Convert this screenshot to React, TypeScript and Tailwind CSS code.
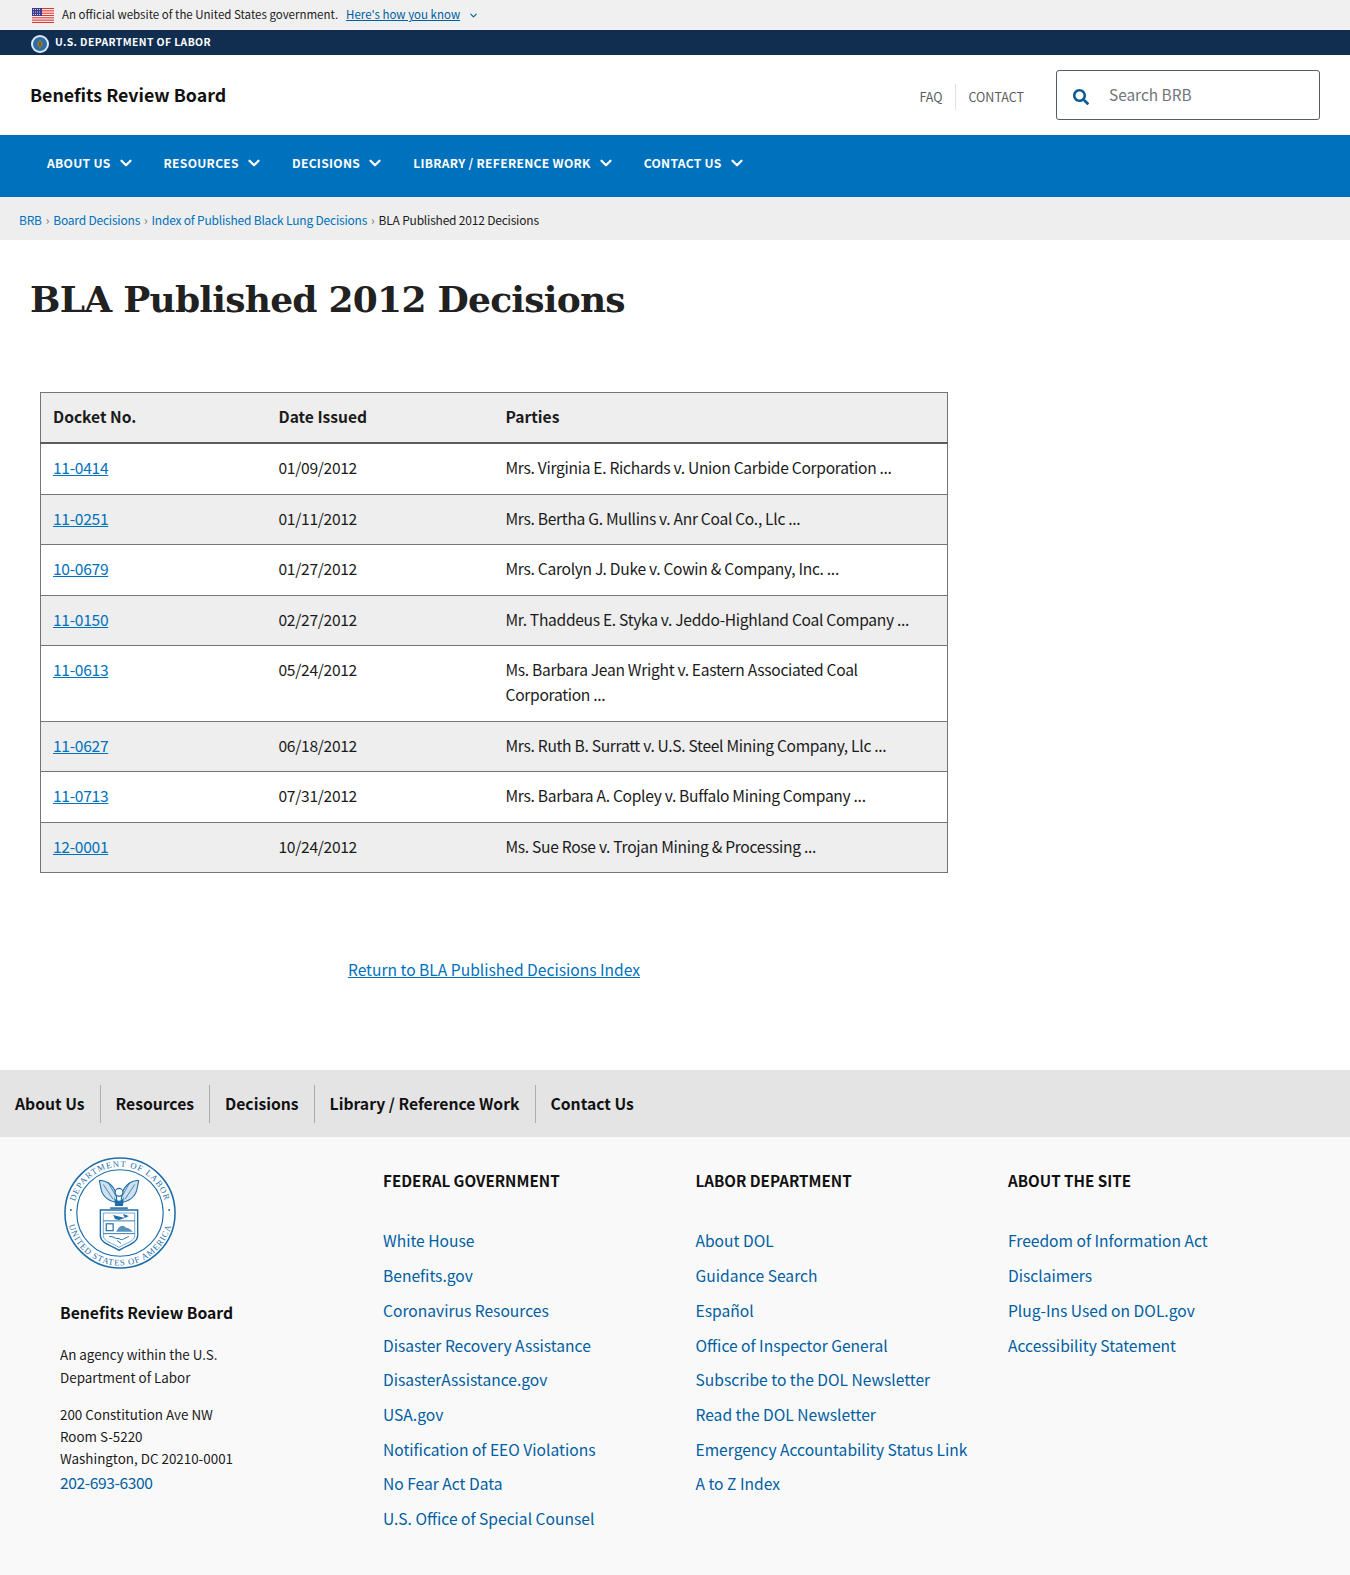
import type { ReactNode } from "react";
import { ChevronDown } from "lucide-react";
import { FaSearch } from "react-icons/fa";

const SANS = { fontFamily: '"Noto Sans CJK SC", "Source Sans Pro", "Noto Sans", sans-serif' };

const navItems = ["About Us", "Resources", "Decisions", "Library / Reference Work", "Contact Us"];

const rows = [
  ["11-0414", "01/09/2012", "Mrs. Virginia E. Richards v. Union Carbide Corporation ..."],
  ["11-0251", "01/11/2012", "Mrs. Bertha G. Mullins v. Anr Coal Co., Llc ..."],
  ["10-0679", "01/27/2012", "Mrs. Carolyn J. Duke v. Cowin & Company, Inc. ..."],
  ["11-0150", "02/27/2012", "Mr. Thaddeus E. Styka v. Jeddo-Highland Coal Company ..."],
  ["11-0613", "05/24/2012", "Ms. Barbara Jean Wright v. Eastern Associated Coal Corporation ..."],
  ["11-0627", "06/18/2012", "Mrs. Ruth B. Surratt v. U.S. Steel Mining Company, Llc ..."],
  ["11-0713", "07/31/2012", "Mrs. Barbara A. Copley v. Buffalo Mining Company ..."],
  ["12-0001", "10/24/2012", "Ms. Sue Rose v. Trojan Mining & Processing ..."],
];

const footerCols = [
  {
    title: "FEDERAL GOVERNMENT",
    links: [
      "White House",
      "Benefits.gov",
      "Coronavirus Resources",
      "Disaster Recovery Assistance",
      "DisasterAssistance.gov",
      "USA.gov",
      "Notification of EEO Violations",
      "No Fear Act Data",
      "U.S. Office of Special Counsel",
    ],
  },
  {
    title: "LABOR DEPARTMENT",
    links: [
      "About DOL",
      "Guidance Search",
      "Español",
      "Office of Inspector General",
      "Subscribe to the DOL Newsletter",
      "Read the DOL Newsletter",
      "Emergency Accountability Status Link",
      "A to Z Index",
    ],
  },
  {
    title: "ABOUT THE SITE",
    links: ["Freedom of Information Act", "Disclaimers", "Plug-Ins Used on DOL.gov", "Accessibility Statement"],
  },
];

function Flag() {
  return (
    <svg width="22" height="15" viewBox="0 0 22 15" aria-hidden>
      <rect width="22" height="15" fill="#fff" />
      {[0, 2, 4, 6, 8, 10, 12].map((y) => (
        <rect key={y} y={y * 1.154} width="22" height="1.154" fill="#d83933" />
      ))}
      <rect width="10" height="8" fill="#3c3b8e" />
      {[1.5, 3.5, 5.5, 7.5].map((x) =>
        [1.5, 4, 6.5].map((y) => <circle key={`${x}-${y}`} cx={x} cy={y} r="0.5" fill="#fff" />),
      )}
    </svg>
  );
}

function SmallSeal() {
  return (
    <svg width="18" height="18" viewBox="0 0 18 18" aria-hidden>
      <circle cx="9" cy="9" r="9" fill="#dfe9f2" />
      <circle cx="9" cy="9" r="7" fill="#2a6fa8" />
      <path d="M9 4.5 L12 9 L9 14 L6 9 Z" fill="#b5682a" />
      <rect x="8.2" y="7" width="1.6" height="5" fill="#3f7d3a" />
    </svg>
  );
}

function Seal() {
  const c = "#1f6da8";
  return (
    <svg width="112" height="112" viewBox="0 0 114 114" aria-hidden>
      <circle cx="57" cy="57" r="56" fill="#fff" stroke={c} strokeWidth="1.6" />
      <circle cx="57" cy="57" r="44" fill="#fff" stroke={c} strokeWidth="1.2" />
      <defs>
        <path id="seal-top" d="M 10 57 A 47 47 0 0 1 104 57" />
        <path id="seal-bottom" d="M 3.5 57 A 53.5 53.5 0 0 0 110.5 57" />
      </defs>
      <text fontFamily='"Liberation Serif", serif' fontSize="8.8" fill={c} letterSpacing="1.1">
        <textPath href="#seal-top" startOffset="50%" textAnchor="middle">
          DEPARTMENT OF LABOR
        </textPath>
      </text>
      <text fontFamily='"Liberation Serif", serif' fontSize="8.8" fill={c} letterSpacing="0.9">
        <textPath href="#seal-bottom" startOffset="50%" textAnchor="middle">
          UNITED STATES OF AMERICA
        </textPath>
      </text>
      <circle cx="7" cy="54" r="1" fill={c} />
      <circle cx="107" cy="54" r="1" fill={c} />
      {/* eagle */}
      <path d="M36 24 C42 23 50 28 53 37 L54 46 C47 46 40 41 38 34 Z" fill="#cfe0ee" stroke={c} strokeWidth="1.1" />
      <path d="M76 24 C70 23 62 28 59 37 L58 46 C65 46 72 41 74 34 Z" fill="#cfe0ee" stroke={c} strokeWidth="1.1" />
      <path d="M40 28 L50 43 M45 26 L53 40 M72 28 L62 43 M67 26 L59 40" stroke={c} strokeWidth="0.8" fill="none" />
      <circle cx="56" cy="36" r="4" fill="#fff" stroke={c} strokeWidth="1.3" />
      <path d="M51 40 C52 46 60 46 61 40 L60 50 L52 50 Z" fill={c} />
      <path d="M47 52 L65 52" stroke={c} strokeWidth="1.6" />
      {/* shield */}
      <path d="M37 54 L75 54 L75 80 C75 88 63 90 56 95 C49 90 37 88 37 80 Z" fill="#fff" stroke={c} strokeWidth="1.4" />
      <path d="M40 57 L72 57 L72 80 C72 86 62 88 56 92 C50 88 40 86 40 80 Z" fill="none" stroke={c} strokeWidth="0.6" />
      <path d="M40 65 L72 65 M40 78 L72 78" stroke={c} strokeWidth="0.9" />
      <path d="M50 59 L62 62 L56 64 L52 63 Z M60 58 L66 60 L62 62 Z" fill={c} />
      <rect x="43" y="68" width="7" height="7" fill="none" stroke={c} strokeWidth="1.2" />
      <path d="M53 76 C57 69 60 69 63 72 C66 72 68 74 70 76 Z" fill={c} opacity="0.75" />
      <path d="M46 81 C50 80 52 84 56 83 C59 86 62 82 66 81 M54 85 L58 88" stroke={c} strokeWidth="1" fill="none" />
    </svg>
  );
}

function Cell({ children }: { children: ReactNode }) {
  return <td className="px-3 pt-[11px] pb-[13px] align-top tracking-[-0.3px]">{children}</td>;
}

export default function App() {
  return (
    <div style={SANS} className="w-[1350px] bg-white text-[15.6px] leading-[25.4px] text-[#1b1b1b]">
      {/* gov banner */}
      <div className="flex h-[30px] items-center bg-[#f0f0f0] pl-8 text-[11.5px]">
        <Flag />
        <span className="ml-2 text-[#1b1b1b]">An official website of the United States government.</span>
        <a href="#" className="ml-2 text-[#005ea2] underline">
          Here's how you know
        </a>
        <ChevronDown className="ml-2 text-[#005ea2]" size={11} strokeWidth={2.5} />
      </div>
      <div className="flex h-[25px] items-center bg-[#112e51] pl-[31px] pb-[2px]">
        <div className="mt-1">
          <SmallSeal />
        </div>
        <span className="ml-[6px] text-[10.4px] font-bold tracking-[0.4px] text-white">U.S. DEPARTMENT OF LABOR</span>
      </div>

      {/* site header */}
      <div className="flex h-[80px] items-center justify-between pl-[30px] pr-[30px]">
        <div className="text-[17.8px] font-bold text-[#111]">Benefits Review Board</div>
        <div className="flex items-center">
          <a href="#" className="mt-[3px] border-r border-[#e0e0e0] pr-3 text-[12.5px] leading-[26px] text-[#5c5c5c]">
            FAQ
          </a>
          <a href="#" className="ml-[13px] mt-[3px] text-[12.5px] leading-[26px] text-[#5c5c5c]">
            CONTACT
          </a>
          <div className="ml-8 flex h-[50px] w-[264px] items-center rounded-[3px] border border-[#565c65] pl-4">
            <FaSearch size={16} className="mt-[3px] text-[#0b5a94]" />
            <span className="ml-[20px] text-[15.4px] text-[#71767a]">Search BRB</span>
          </div>
        </div>
      </div>

      {/* main nav */}
      <div className="flex h-[62px] items-start bg-[#0071bc] pl-[31px]">
        {navItems.map((n) => (
          <div key={n} className="flex h-[56px] items-center pl-4 pr-[13px]">
            <span className="text-[12.1px] font-bold uppercase tracking-[0.3px] text-white">{n}</span>
            <ChevronDown size={18} strokeWidth={3} className="ml-[6px] text-white" />
          </div>
        ))}
      </div>

      {/* breadcrumb */}
      <div className="flex h-[43px] items-center bg-[#eeeeee] pl-[19px] pt-[2px] text-[12px] tracking-[-0.2px]">
        <a href="#" className="text-[#0071bc]">BRB</a>
        <span className="mx-[4px] text-[#71767a]">›</span>
        <a href="#" className="text-[#0071bc]">Board Decisions</a>
        <span className="mx-[4px] text-[#71767a]">›</span>
        <a href="#" className="text-[#0071bc]">Index of Published Black Lung Decisions</a>
        <span className="mx-[4px] text-[#71767a]">›</span>
        <span>BLA Published 2012 Decisions</span>
      </div>

      <h1
        style={{ fontFamily: '"DejaVu Serif", "Liberation Serif", serif' }}
        className="pl-[30px] pt-[31px] text-[36px] font-bold leading-[56px] tracking-[-0.75px] text-[#212121]"
      >
        BLA Published 2012 Decisions
      </h1>

      {/* table */}
      <div className="pl-10 pt-[65px]">
        <table className="w-[908px] table-fixed border-collapse border border-[#757575]">
          <thead>
            <tr className="border-b-2 border-[#5c5c5c] bg-[#eeeeee] text-left font-bold">
              <th className="w-[226px] px-3 pt-[11px] pb-[13px] font-bold">Docket No.</th>
              <th className="w-[227px] px-3 pt-[11px] pb-[13px] font-bold">Date Issued</th>
              <th className="px-3 pt-[11px] pb-[13px] font-bold">Parties</th>
            </tr>
          </thead>
          <tbody>
            {rows.map((r, i) => (
              <tr key={r[0]} className={`border-b border-[#757575] ${i % 2 === 1 ? "bg-[#eeeeee]" : "bg-white"}`}>
                <Cell>
                  <a href="#" className="text-[#0071bc] underline">
                    {r[0]}
                  </a>
                </Cell>
                <Cell>{r[1]}</Cell>
                <Cell>{r[2]}</Cell>
              </tr>
            ))}
          </tbody>
        </table>
        <div className="w-[908px] pt-[84px] text-center">
          <a href="#" className="text-[#0071bc] underline">
            Return to BLA Published Decisions Index
          </a>
        </div>
      </div>

      {/* footer nav */}
      <div className="mt-[88px] flex h-[67px] items-center bg-[#e4e4e4]">
        {navItems.map((n, i) => (
          <div
            key={n}
            className={`flex h-[38px] items-center px-[15px] text-[15.7px] font-bold text-[#111] ${i < navItems.length - 1 ? "border-r border-[#a9aeb1]" : ""}`}
          >
            {n}
          </div>
        ))}
      </div>

      {/* footer */}
      <div className="flex h-[438px] bg-[#f9f9f9]">
        <div className="w-[383px] pl-[60px] pt-[20px]">
          <div className="ml-[4px]">
            <Seal />
          </div>
          <div className="mt-[31px] text-[15.7px] font-bold leading-[26px] text-[#111]">Benefits Review Board</div>
          <p className="mt-[17px] text-[13.4px] leading-[22.2px]">
            An agency within the U.S.
            <br />
            Department of Labor
          </p>
          <p className="mt-[15px] text-[13.4px] leading-[22.2px]">
            200 Constitution Ave NW
            <br />
            Room S-5220
            <br />
            Washington, DC 20210-0001
          </p>
          <a href="#" className="text-[15.6px] leading-[26px] tracking-[-0.4px] text-[#005ea2]">
            202-693-6300
          </a>
        </div>
        {footerCols.map((col) => (
          <div key={col.title} className="w-[312.5px] pt-[30px]">
            <div className="text-[15.2px] font-bold leading-[26px] text-[#111]">{col.title}</div>
            <ul className="mt-[30px]">
              {col.links.map((l) => (
                <li key={l} className="leading-[34.7px]">
                  <a href="#" className="text-[#005ea2]">
                    {l}
                  </a>
                </li>
              ))}
            </ul>
          </div>
        ))}
      </div>
    </div>
  );
}
